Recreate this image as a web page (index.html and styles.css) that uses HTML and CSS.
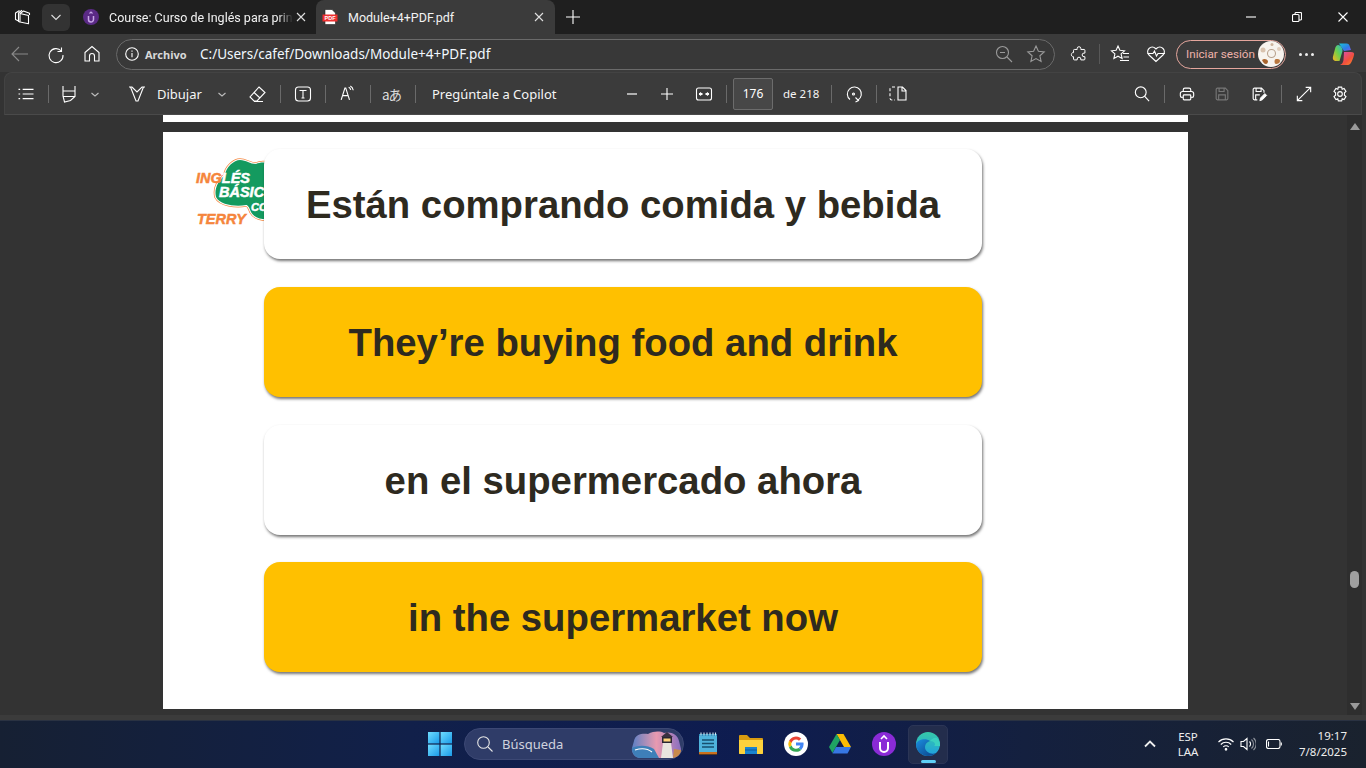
FILE: index.html
```html
<!DOCTYPE html>
<html lang="es">
<head>
<meta charset="utf-8">
<title>Module+4+PDF.pdf</title>
<link rel="stylesheet" href="styles.css">
</head>
<body>
<div class="window">
  <header class="tabbar">
    <svg class="ic20 ml12 rj" viewBox="0 0 20 20"><path d="M8 6.500 16.500 8.500v8.200L8 15z"/><path d="M8 6.500 11.500 4l6 2.300v1.800"/><path d="M8 15l-1.500-.5V6l3.500-2.800M6.500 14 3.500 12.500V6L7.500 3.500"/></svg>
    <button class="drop ml10"><svg class="ic12" viewBox="0 0 12 12"><path d="M1.500 4 6 8.500 10.500 4"/></svg></button>
    <div class="tab tab-idle">
      <svg class="fav" viewBox="0 0 16 16"><circle cx="8" cy="8" r="8" fill="#5b2a86"/><path d="M5.500 7v3.500a2.500 2.500 0 0 0 5 0V7" fill="none" stroke="#c9a9e8" stroke-width="1.500"/><path d="M6.500 4.500 8 3l1.500 1.500" fill="none" stroke="#c9a9e8"/></svg>
      <span class="tab-title tab-fade">Course: Curso de Inglés para prin</span>
      <svg class="ic10 close1" viewBox="0 0 10 10"><path d="M1 1l8 8M9 1l-8 8"/></svg>
    </div>
    <div class="tab tab-active">
      <svg class="pdf-fav" viewBox="0 0 16 16"><path d="M3 .5h7l3.500 3.500v11.500H3z" fill="#fff" stroke="#222" stroke-width=".6"/><rect x=".5" y="5.500" width="15" height="7" fill="#ee2f2f"/><text x="8" y="11" class="pdf-fav-t">PDF</text></svg>
      <span class="tab-title tab-title-a">Module+4+PDF.pdf</span>
      <svg class="ic10" viewBox="0 0 10 10"><path d="M1 1l8 8M9 1l-8 8"/></svg>
    </div>
    <svg class="ic14 ml11" viewBox="0 0 14 14"><path d="M7 0v14M0 7h14"/></svg>
    <div class="winctl">
      <svg class="ic10" viewBox="0 0 10 10"><path d="M0 5h10"/></svg>
      <svg class="ic10" viewBox="0 0 10 10"><rect x=".5" y="2.500" width="6.500" height="7" rx="1"/><path d="M3 2.500V1.500a1 1 0 0 1 1-1h4.500a1 1 0 0 1 1 1V7a1 1 0 0 1-1 1H7"/></svg>
      <svg class="ic10" viewBox="0 0 10 10"><path d="M.5.5l9 9M9.500.5l-9 9"/></svg>
    </div>
  </header>

  <nav class="addrbar">
    <svg class="ic20 ml10 dim" viewBox="0 0 20 20"><path d="M18 10H2M9 3l-7 7 7 7"/></svg>
    <svg class="ic20 ml16" viewBox="0 0 20 20"><path d="M15.500 3.500v4h-4M15.300 7A7 7 0 1 0 17 11"/></svg>
    <svg class="ic20 ml16" viewBox="0 0 20 20"><path d="M3 8.500 10 2.500l7 6V17h-4.500v-5a2.500 2.500 0 0 0-5 0v5H3z"/></svg>
    <div class="omnibox">
      <svg class="ic14 ml8" viewBox="0 0 14 14"><circle cx="7" cy="7" r="6.300"/><path d="M7 6v4.200M7 3.500v1.200"/></svg>
      <span class="archivo">Archivo</span>
      <span class="url">C:/Users/cafef/Downloads/Module+4+PDF.pdf</span>
      <svg class="ic18 mlauto dim2" viewBox="0 0 18 18"><circle cx="7.500" cy="7.500" r="6"/><path d="M12 12l5 5M5 7.500h5"/></svg>
      <svg class="ic20 ml13 dim2" viewBox="0 0 20 20"><path d="M10 2l2.400 5.300 5.800.6-4.300 3.900 1.200 5.700-5.100-2.900-5.100 2.900 1.200-5.700L1.800 7.900l5.800-.6z"/></svg>
    </div>
    <svg class="ic20 ml14" viewBox="-1 -1 22 22"><path d="M8 4a2 2 0 0 1 4 0v1h3.500a1 1 0 0 1 1 1v3H15.500a2 2 0 0 0 0 4h1v2.500a1 1 0 0 1-1 1H12v-1a2 2 0 0 0-4 0v1H5a1 1 0 0 1-1-1V13H3a2.500 2.500 0 0 1 0-4.500h1V6a1 1 0 0 1 1-1h3z"/></svg>
    <i class="sep sep-a ml10"></i>
    <svg class="ic20 ml10" viewBox="0 0 20 20"><path d="M8 2l1.900 4.300 4.600.5-3.400 3.100 1 4.600L8 12.200l-4.100 2.300 1-4.600L1.500 6.800l4.600-.5z"/><path d="M13 9.500h6M13.500 13h5.500M10 16.500h9"/></svg>
    <svg class="ic20 ml16" viewBox="0 0 20 20"><path d="M10 17.500 3 11a4.500 4.500 0 0 1 0-6.500 4.600 4.600 0 0 1 6.500 0l.5.500.5-.5a4.600 4.600 0 0 1 6.500 0A4.500 4.500 0 0 1 17 11z"/><path d="M1.500 9.500h5.500l1.500-2.500 2 5 1.500-2.500h7"/></svg>
    <div class="login">
      <span class="login-t">Iniciar sesión</span>
      <svg class="avatar" viewBox="0 0 26 26"><circle cx="13" cy="13" r="13" fill="#f7f3ee"/><circle cx="13.500" cy="12.500" r="4" fill="none" stroke="#b9a28e"/><circle cx="5" cy="9" r="2.500" fill="#d9c3af"/><path d="M4 19c2-2 5-1 6 1 0 2-1 3-2 3-2 0-3-2-4-4z" fill="#a9642d"/><path d="M18 18c2 0 4 0 4 2s-2 3-4 3-2-5 0-5z" fill="#b9773f"/><circle cx="21" cy="8" r="2" fill="#e2cfbe"/><circle cx="14" cy="3.500" r="1.500" fill="#cdb39c"/></svg>
    </div>
    <div class="dots"><i></i><i></i><i></i></div>
    <svg class="copilot" viewBox="0 0 24 24">
      <defs>
        <linearGradient id="cp1" x1="0" y1="0" x2="1" y2="1"><stop offset="0" stop-color="#19c3d6"/><stop offset=".6" stop-color="#2f7be8"/><stop offset="1" stop-color="#7b5be6"/></linearGradient>
        <linearGradient id="cp2" x1="0" y1="1" x2="1" y2="0"><stop offset="0" stop-color="#ffb01f"/><stop offset=".5" stop-color="#6fd04a"/><stop offset="1" stop-color="#25b8d8"/></linearGradient>
        <linearGradient id="cp3" x1="0" y1="0" x2="1" y2="1"><stop offset="0" stop-color="#d84fc0"/><stop offset=".6" stop-color="#f0503c"/><stop offset="1" stop-color="#ff8a2a"/></linearGradient>
      </defs>
      <path d="M8 1.500h7.500c2 0 2.800 1.200 3.300 3L20 8l-7 1z" fill="url(#cp1)"/>
      <path d="M7 3C5 3.500 4.500 5 4 7l-2 7.500c-.7 3 1 4.500 3 4.500h3.500l3-10C12 7 10 3 7 3z" fill="url(#cp2)"/>
      <path d="M13 10h7c2.500 0 3.500 1 3 3-.8 3-2.200 7-3.500 8.500-1 1-2 1.500-3.500 1.500H8c3 0 4-2.500 4.500-5z" fill="url(#cp3)"/>
    </svg>
  </nav>

  <div class="pdfbar">
    <svg class="ic20 ml11" viewBox="-2 -2 24 24"><path d="M6 4.500h13M6 10h13M6 15.500h13M1 4.500h2M1 10h2M1 15.500h2" class="sw14"/></svg>
    <i class="sep ml12"></i>
    <svg class="ic20 ml10" viewBox="0 0 20 20"><path d="M4 2v5h12V2M4 7v5l1.500 6 6-1.500 4.500-4V7M4 12.500h12"/></svg>
    <svg class="ic12 ml10 dim3" viewBox="0 0 12 12"><path d="M2.500 5 6 8l3.500-3"/></svg>
    <svg class="ic20 ml26" viewBox="0 0 20 20"><path d="M2 3h3l5 5 5-5h3M3.500 3 9 17h2l5.500-14"/></svg>
    <span class="pt t-dib ml10">Dibujar</span>
    <svg class="ic12 ml14 dim3" viewBox="0 0 12 12"><path d="M2.500 5 6 8l3.500-3"/></svg>
    <svg class="ic20 ml19" viewBox="0 0 20 20"><path d="M12 3 18 8.500 10 17H7l-4-4zM7 8.500l6 5.500M7 17.500h9"/></svg>
    <i class="sep ml13"></i>
    <svg class="ic20 ml12" viewBox="0 0 20 20"><rect x="2.500" y="3" width="15" height="14" rx="3"/><path d="M6.500 6.500h7M10 6.500v7.500M8.500 14h3"/></svg>
    <i class="sep ml12"></i>
    <svg class="ic20 ml11" viewBox="-1 -1 24 24"><path d="M4 18 8.500 4h1L14 18M5.500 13h7" class="sw14"/><path d="M13 3c1.500.7 2 1.500 2.500 3M15 1.500c2 1 3 2.500 3.500 5" class="sw14"/></svg>
    <i class="sep ml13"></i>
    <span class="trans ml11">aあ</span>
    <i class="sep ml13"></i>
    <span class="pt t-cop ml16">Pregúntale a Copilot</span>
    <svg class="ic20 ml64 dim3" viewBox="0 0 20 20"><path d="M5 10h10" class="bold"/></svg>
    <svg class="ic20 ml15" viewBox="0 0 20 20"><path d="M10 4v12M4 10h12"/></svg>
    <svg class="ic20 ml17" viewBox="0 0 20 20"><rect x="2.500" y="4" width="15" height="12" rx="2"/><path d="M5 10h3.500M11.500 10H15" class="bold"/><path d="M7 8.500 5.500 10 7 11.500M13 8.500l1.500 1.500-1.500 1.500"/></svg>
    <i class="sep ml12"></i>
    <div class="pageinput ml6">176</div>
    <span class="pt t-de ml10">de 218</span>
    <i class="sep ml12"></i>
    <svg class="ic20 ml12" viewBox="0 0 20 20"><path d="M6 15.500A7 7 0 1 1 14 16"/><path d="M11.500 13.500l3 3-3 1.500"/><circle cx="9.500" cy="10" r="1"/></svg>
    <i class="sep ml12"></i>
    <svg class="ic20 ml11" viewBox="0 0 20 20"><path d="M10 3h4.500L18 6.500V16h-8zM14 3v4h4"/><path d="M7 3H4a2 2 0 0 0-2 2v9a2 2 0 0 0 2 2h3" stroke-dasharray="3 2"/></svg>
    <svg class="ic20 mlauto" viewBox="-2 -2 24 24"><circle cx="8.500" cy="8" r="6.500" class="sw14"/><path d="M13 12.500l5.500 6" class="sw14"/></svg>
    <i class="sep ml12"></i>
    <svg class="ic20 ml12" viewBox="-2 -2 24 24"><path class="sw14" d="M5.500 7V5a2 2 0 0 1 2-2h5a2 2 0 0 1 2 2v2"/><path class="sw14" d="M5 14H4a2 2 0 0 1-2-2V9.500a2.500 2.500 0 0 1 2.500-2.500h11A2.500 2.500 0 0 1 18 9.500V12a2 2 0 0 1-2 2h-1"/><rect class="sw14" x="5.500" y="11" width="9" height="6" rx="1"/></svg>
    <svg class="ic20 ml15 dim4" viewBox="-2 -2 24 24"><path class="sw14" d="M3 4.500A1.500 1.500 0 0 1 4.500 3H14l3 3v9.500a1.500 1.500 0 0 1-1.500 1.500h-11A1.500 1.500 0 0 1 3 15.500zM6.500 3v4h6V3M6 17v-6h8v6"/></svg>
    <svg class="ic20 ml17" viewBox="-2 -2 24 24"><path class="sw14" d="M8 17H4.500A1.500 1.500 0 0 1 3 15.500v-11A1.500 1.500 0 0 1 4.500 3H13l3 3v2.500M6.500 3v4h6V3M6 17v-6h5"/><path d="M11 18l.8-3.200 5.200-5.300 2.200 2.200-5.200 5.300z" class="fillw"/></svg>
    <i class="sep ml12"></i>
    <svg class="ic20 ml12" viewBox="-2 -2 24 24"><path class="sw14" d="M18 2 2 18M12 2h6v6M2 12v6h6"/></svg>
    <svg class="ic20 ml16" viewBox="-2 -2 24 24"><path class="sw14" d="M8 1.800h4l.6 2.500 2.300-1 2.300 3.500-1.900 1.800v2.800l1.900 1.800-2.300 3.500-2.300-1-.6 2.500H8l-.6-2.500-2.300 1-2.300-3.500 1.900-1.800V8.600L2.800 6.800l2.300-3.500 2.300 1z"/><circle class="sw14" cx="10" cy="10" r="2.800"/></svg>
  </div>

  <main class="viewer">
    <div class="doc">
      <div class="page page-prev"></div>
      <section class="page page-cur">
        <svg class="logo" viewBox="0 0 80 75">
          <path class="cl-o" d="M35 20C36 12 44 5 50 5c6 0 10 4 16 4 4-2 10-2 14 0v55c-8 1-16-1-19-7-2-5-3-7-5-7-10 2-26 0-30-8-2-8 2-16 9-22z"/>
          <path class="cl-w" d="M35 20C36 12 44 5 50 5c6 0 10 4 16 4 4-2 10-2 14 0v55c-8 1-16-1-19-7-2-5-3-7-5-7-10 2-26 0-30-8-2-8 2-16 9-22z"/>
          <path class="cl-g" d="M35 20C36 12 44 5 50 5c6 0 10 4 16 4 4-2 10-2 14 0v55c-8 1-16-1-19-7-2-5-3-7-5-7-10 2-26 0-30-8-2-8 2-16 9-22z"/>
          <text class="lg lg-o" x="6" y="28">ING<tspan class="lg-w">LÉS</tspan></text>
          <text class="lg lg-w" x="29" y="42">BÁSIC</text>
          <text class="lg lg-w lg-s" x="61" y="56">CO</text>
          <text class="lg lg-o" x="7" y="69">TERRY</text>
        </svg>
        <div class="card card-w">Están comprando comida y bebida</div>
        <div class="card card-y">They’re buying food and drink</div>
        <div class="card card-w">en el supermercado ahora</div>
        <div class="card card-y">in the supermarket now</div>
      </section>
    </div>
    <aside class="scroll">
      <i class="arrow arrow-up"></i>
      <i class="thumb"></i>
      <i class="arrow arrow-down"></i>
    </aside>
  </main>
  <div class="foot"></div>

  <footer class="taskbar">
    <div class="tb-center">
      <svg class="win" viewBox="0 0 24 24">
        <defs><linearGradient id="w" x1="0" y1="0" x2="1" y2="1"><stop offset="0" stop-color="#6fdcff"/><stop offset="1" stop-color="#1a9be8"/></linearGradient></defs>
        <rect width="11.400" height="11.400" fill="url(#w)"/><rect x="12.600" width="11.400" height="11.400" fill="url(#w)"/><rect y="12.600" width="11.400" height="11.400" fill="url(#w)"/><rect x="12.600" y="12.600" width="11.400" height="11.400" fill="url(#w)"/>
      </svg>
      <div class="search">
        <svg class="ic18 srch" viewBox="0 0 18 18"><circle cx="7.500" cy="7.500" r="5.800"/><path d="M12 12l4.500 4.500"/></svg>
        <span class="search-t">Búsqueda</span>
        <svg class="light" viewBox="0 0 50 30">
          <defs><linearGradient id="sk" x1="0" y1="0" x2="1" y2="0"><stop offset="0" stop-color="#5b7fc4"/><stop offset=".5" stop-color="#e89ab0"/><stop offset="1" stop-color="#8a6fc0"/></linearGradient></defs>
          <path d="M3 12C4 5 12 4 17 5c6-3 12-3 16-1 6-2 14 1 15 8l2 8c0 5-4 9-9 9H10C4 29 0 24 1 19z" fill="url(#sk)"/>
          <path d="M1 19c7-3 15-3 22 1l5 9H9C5 29 1 25 1 19z" fill="#3e7fb8"/>
          <path d="M30 29l2-15h8l2 15z" fill="#e9e5df"/><rect x="31" y="8" width="10" height="6" fill="#2a2733"/><path d="M30 8l6-5 6 5z" fill="#3a3040"/><rect x="32.500" y="9.500" width="7" height="3" fill="#ffd37a"/>
          <path d="M42 29l1-9 7 1c0 4-4 8-9 8z" fill="#c98a4a"/>
          <path d="M4 21c6-2 12-2 17 2" stroke="#fff" fill="none"/>
        </svg>
      </div>
      <svg class="app ml-a1" viewBox="0 0 24 24"><rect x="3" y="2" width="18" height="20" fill="#4fb3dc"/><path d="M3 2h18v2H3z" fill="#2f8fbe"/><path d="M5 .5v3M8 .5v3M11 .5v3M14 .5v3M17 .5v3M19.500 .5v3" stroke="#cfeaf5"/><path d="M6 8h12M6 11.500h12M6 15h12" stroke="#17506f" stroke-width="1.300"/><rect x="3" y="20" width="18" height="2" fill="#c96f1e"/><rect x="3" y="22" width="18" height="1" fill="#5a3a20"/></svg>
      <svg class="app ml-a2" viewBox="0 0 24 24"><path d="M0 4a1 1 0 0 1 1-1h7l3 3h12a1 1 0 0 1 1 1v14a1 1 0 0 1-1 1H1a1 1 0 0 1-1-1z" fill="#d99c10"/><path d="M0 8h24v13a1 1 0 0 1-1 1H1a1 1 0 0 1-1-1z" fill="#fdd23c"/><path d="M6 15h12v7H6z" fill="#1a84d0"/><path d="M6 18h12" stroke="#0f5f9f"/></svg>
      <svg class="app ml-a3" viewBox="0 0 24 24"><circle cx="12" cy="12" r="12" fill="#fff"/><path d="M12 7.500a4.500 4.500 0 0 1 3 1.200l2.200-2.200A7.800 7.800 0 0 0 5 8.900l2.600 2A4.700 4.700 0 0 1 12 7.500z" fill="#ea4335"/><path d="M19.600 12.200c0-.6 0-1.100-.2-1.700H12v3.100h4.300a3.700 3.700 0 0 1-1.600 2.400l2.500 2a7.700 7.700 0 0 0 2.400-5.800z" fill="#4285f4"/><path d="M7.500 13.400a4.700 4.700 0 0 1 0-2.800L5 8.700a7.800 7.800 0 0 0 0 6.600z" fill="#fbbc05"/><path d="M12 19.800c2.100 0 3.900-.7 5.200-1.900l-2.500-2a4.700 4.700 0 0 1-7.100-2.500l-2.600 2A7.800 7.800 0 0 0 12 19.800z" fill="#34a853"/></svg>
      <svg class="app ml-a4" viewBox="0 0 24 24"><path d="M8.500 2h7L23 15h-7z" fill="#fbbc04"/><path d="M8.500 2 1 15l3.500 6 7.500-13z" fill="#1fa463"/><path d="M4.500 21.500 8 15h15l-3.500 6.500z" fill="#3777e3"/></svg>
      <svg class="app ml-a5" viewBox="0 0 24 24"><circle cx="12" cy="12" r="12" fill="#8a2bd6"/><path d="M8 10v6a4 4 0 0 0 8 0v-6" fill="none" stroke="#fff" stroke-width="2"/><path d="M9 7l3-3 3 3" fill="none" stroke="#fff" stroke-width="1.600"/></svg>
      <div class="edgebox">
        <svg class="edge" viewBox="0 0 24 24">
          <defs><linearGradient id="e1" x1="0" y1="0" x2="0" y2="1"><stop offset="0" stop-color="#36c9a8"/><stop offset="1" stop-color="#1f9fe0"/></linearGradient><linearGradient id="e2" x1="0" y1="0" x2="1" y2="1"><stop offset="0" stop-color="#1a8fe0"/><stop offset="1" stop-color="#0b3f85"/></linearGradient></defs>
          <circle cx="12" cy="12" r="12" fill="url(#e1)"/>
          <path d="M0 12c0 7 5.500 12 12 12 3 0 6-1 8-3-5 2-11-1-11-6 0-3 2-5 5-6-4-3-12-2-14 3z" fill="url(#e2)"/>
          <path d="M14 9c3 0 5 1.500 5 3.500 0 1-1 1.500-2.500 1.500H24c.3-3-1-6-3-8-3-1-5 1-7 3z" fill="#3ad0c0"/>
        </svg>
        <i class="edgeline"></i>
      </div>
    </div>
    <div class="tray">
      <svg class="ic12 tray-up" viewBox="0 0 12 12"><path d="M1 8.500 6 3.500l5 5" class="bold"/></svg>
      <div class="lang"><span>ESP</span><span>LAA</span></div>
      <svg class="ic16 ml-w" viewBox="0 0 16 16"><path d="M.5 6a10.500 10.500 0 0 1 15 0M2.800 8.500a7.200 7.200 0 0 1 10.400 0M5.200 11a3.800 3.800 0 0 1 5.600 0"/><circle cx="8" cy="13.300" r=".8" class="fillw"/></svg>
      <svg class="ic16 ml-s" viewBox="0 0 16 16"><path d="M1 5.500h2.500L7 2.500v11l-3.500-3H1zM9.500 5.500a3.500 3.500 0 0 1 0 5"/><path d="M11.500 3.500a6 6 0 0 1 0 9M13.500 2a8 8 0 0 1 0 12" class="faint"/></svg>
      <svg class="batt" viewBox="0 0 16 10"><rect x=".5" y=".5" width="13.500" height="9" rx="2"/><path d="M2.500 2.500v5M15.300 3.500v3"/></svg>
      <div class="clock"><span>19:17</span><span>7/8/2025</span></div>
    </div>
  </footer>
</div>
</body>
</html>
```
FILE: styles.css
```css
*{box-sizing:border-box}
html,body{margin:0;height:100%;overflow:hidden}
body{font-family:"Noto Sans","Open Sans",sans-serif;color:#fff;background:#333}
svg{display:block;flex:none;fill:none;stroke:currentColor;stroke-width:1.100}
i{display:block;flex:none}
.window{width:1366px;height:768px;display:flex;flex-direction:column}
.ic10{width:10px;height:10px}.ic12{width:12px;height:12px}.ic14{width:14px;height:14px}.ic16{width:16px;height:16px}.ic18{width:18px;height:18px}.ic20{width:20px;height:20px}
.dim{color:#8a8a8a}.dim2{color:#9a9a9a}.dim3{color:#bdbdbd}.dim4{color:#777}
.fillw{fill:#fff;stroke:#fff}.bold{stroke-width:1.800}.faint{opacity:.5}.sw14{stroke-width:1.350}.rj{stroke-linejoin:round}
.ml6{margin-left:6px}.ml8{margin-left:8px}.ml10{margin-left:10px}.ml11{margin-left:11px}.ml12{margin-left:12px}.ml13{margin-left:13px}.ml14{margin-left:14px}.ml15{margin-left:15px}.ml16{margin-left:16px}.ml17{margin-left:17px}.ml19{margin-left:19px}.ml26{margin-left:26px}.ml64{margin-left:64px}.mlauto{margin-left:auto}

.tabbar{height:34px;background:#1f1f1f;display:flex;align-items:center;flex:none}
.drop{width:28px;height:27px;margin-left:10px;background:#333;border:0;border-radius:6px;color:#ddd;display:flex;align-items:center;justify-content:center;padding:0}
.tab{height:34px;display:flex;align-items:center;position:relative}
.tab-idle{width:243px;margin-left:3px;padding-left:10px;padding-right:10px}
.tab-active{width:239px;background:#3b3b3b;border-radius:8px 8px 0 0;padding-left:6px;padding-right:11px;align-self:flex-end}
.fav{width:16px;height:16px;stroke:none}
.pdf-fav{width:16px;height:16px;stroke:none}
.pdf-fav-t{font:bold 5.500px "Liberation Sans",sans-serif;fill:#fff;text-anchor:middle;stroke:none}
.tab-title{font:12.500px Roboto,"Noto Sans",sans-serif;white-space:nowrap;color:#f2f2f2;margin-left:10px}
.tab-fade{-webkit-mask-image:linear-gradient(90deg,#000 92%,transparent);mask-image:linear-gradient(90deg,#000 92%,transparent)}
.tab-idle .ic10,.tab-active .ic10{margin-left:auto;color:#e0e0e0}
.winctl{margin-left:auto;display:flex;gap:36px;padding-right:18px}

.addrbar{height:38px;padding-top:2px;background:#3b3b3b;display:flex;align-items:center;flex:none}
.omnibox{width:939px;height:31px;margin-left:14px;border:1px solid #6a6a6a;border-radius:16px;display:flex;align-items:center;padding-right:8px;background:#383838}
.archivo{font-size:11px;font-weight:700;margin-left:6px;color:#d8d8d8;width:41px;white-space:nowrap}
.url{font-size:13.500px;margin-left:14px;color:#f2f8ff;white-space:nowrap}
.sep{width:1px;height:18px;background:#6a6a6a}
.sep-a{height:20px;background:#585858}
.login{width:110px;height:29px;margin-left:10px;border:1px solid #e5a69d;border-radius:15px;display:flex;align-items:center;justify-content:space-between;padding:0 1px 0 9px}
.login-t{font:11.700px Roboto,"Noto Sans",sans-serif;color:#eeb2aa;white-space:nowrap}
.avatar{width:26px;height:26px;stroke:none}
.dots{margin-left:13px;display:flex;gap:3px}
.dots i{width:3px;height:3px;border-radius:50%;background:#eee}
.copilot{width:24px;height:24px;margin-left:17px;stroke:none}

.pdfbar{height:43px;margin:0 4px;background:#3b3b3b;border:1px solid #434343;border-bottom-color:#4a4a4a;border-radius:8px 8px 0 0;display:flex;align-items:center;flex:none;padding-right:11px}
.pt{font-size:13px;color:#f5f5f5;white-space:nowrap;display:block}
.t-dib{width:45px}.t-cop{width:126px}.t-de{width:36px;font-size:11.500px}
.trans{font:13.500px "Noto Sans CJK JP","Noto Sans",sans-serif;width:20px;color:#ddd;white-space:nowrap;letter-spacing:-1px}
.pageinput{width:40px;height:32px;background:#474747;border:1px solid #6c6c6c;border-radius:2px;font-size:12px;display:flex;align-items:center;justify-content:center}

.viewer{flex:1;min-height:0;background:#333;display:flex;overflow:hidden}
.doc{width:1347px;padding-left:163px;display:flex;flex-direction:column;gap:10px}
.page{width:1025px;background:#fff;flex:none}
.page-prev{height:7px}
.page-cur{height:577px;position:relative;padding:17px 0 0 101px;display:flex;flex-direction:column;gap:27.750px}
.card{width:718px;height:110px;flex:none;border-radius:16px;display:flex;align-items:center;justify-content:center;padding-top:2px;font:bold 38.300px "Liberation Sans",Arial,sans-serif;color:#2e2a1f;box-shadow:1px 2px 3px rgba(0,0,0,.55);position:relative}
.card-w{background:#fff}
.card-y{background:#ffc000}
.logo{position:absolute;left:27px;top:23px;width:80px;height:75px;stroke:none}
.cl-o{fill:none;stroke:#f58a45;stroke-width:3.500}
.cl-w{fill:none;stroke:#fff;stroke-width:2}
.cl-g{fill:#149a5f;stroke:none}
.lg{font:italic bold 14.500px "Liberation Sans",sans-serif;stroke-width:.5}
.lg-o{fill:#f5853c;stroke:#f5853c}
.lg-w{fill:#fff;stroke:#fff}
.lg-s{font-size:11px}

.scroll{width:15px;background:#2e2e2e;display:flex;flex-direction:column;align-items:center;position:relative;padding:8px 0 5px}
.arrow{width:0;height:0;border-left:5px solid transparent;border-right:5px solid transparent}
.arrow-up{border-bottom:7px solid #9a9a9a}
.arrow-down{border-top:7px solid #9a9a9a;margin-top:auto}
.thumb{position:absolute;left:3px;top:456px;width:9px;height:17px;border-radius:5px;background:#a0a0a0}
.foot{height:5px;background:#3b3b3b;flex:none}

.taskbar{height:48px;flex:none;background:linear-gradient(90deg,#162033 0,#11204a 30%,#0e1c50 55%,#14203f 75%,#1a222e 100%);box-shadow:inset 0 1px #2a3242;display:flex;align-items:center;position:relative}
.tb-center{display:flex;align-items:center;padding-left:428px}
.win{width:24px;height:24px;stroke:none}
.search{width:220px;height:32px;margin-left:12px;border-radius:16px;background:#2f3c68;border:1px solid #3c4874;display:flex;align-items:center;padding:0 2px 0 11px}
.srch{color:#e6e6e6}
.search-t{font-size:13px;margin-left:8px;color:#cfd3df}
.light{width:50px;height:30px;margin-left:auto;stroke:none}
.app{width:24px;height:24px;stroke:none}
.ml-a1{margin-left:12px}.ml-a2{margin-left:19px}.ml-a3{margin-left:21px}.ml-a4{margin-left:20px}.ml-a5{margin-left:20px}
.edgebox{width:40px;height:39px;margin-left:12px;background:#232d4c;border:1px solid #2b3556;border-radius:5px;display:flex;flex-direction:column;align-items:center;padding-top:6px;position:relative}
.edge{width:24px;height:24px;stroke:none}
.edgeline{width:15px;height:3px;border-radius:2px;background:#5fd0f7;position:absolute;bottom:0;left:12px}
.tray{margin-left:auto;display:flex;align-items:center;padding-right:19px}
.tray-up{color:#eee}
.lang{width:40px;margin-left:12px;display:flex;flex-direction:column;align-items:center;font-size:11.500px;line-height:15px;color:#eee}
.ml-w{margin-left:10px}.ml-s{margin-left:6px}
.batt{width:16px;height:10px;margin-left:10px}
.clock{margin-left:15px;width:50px;display:flex;flex-direction:column;align-items:flex-end;font-size:11.500px;line-height:16px;color:#eee;white-space:nowrap}
```
